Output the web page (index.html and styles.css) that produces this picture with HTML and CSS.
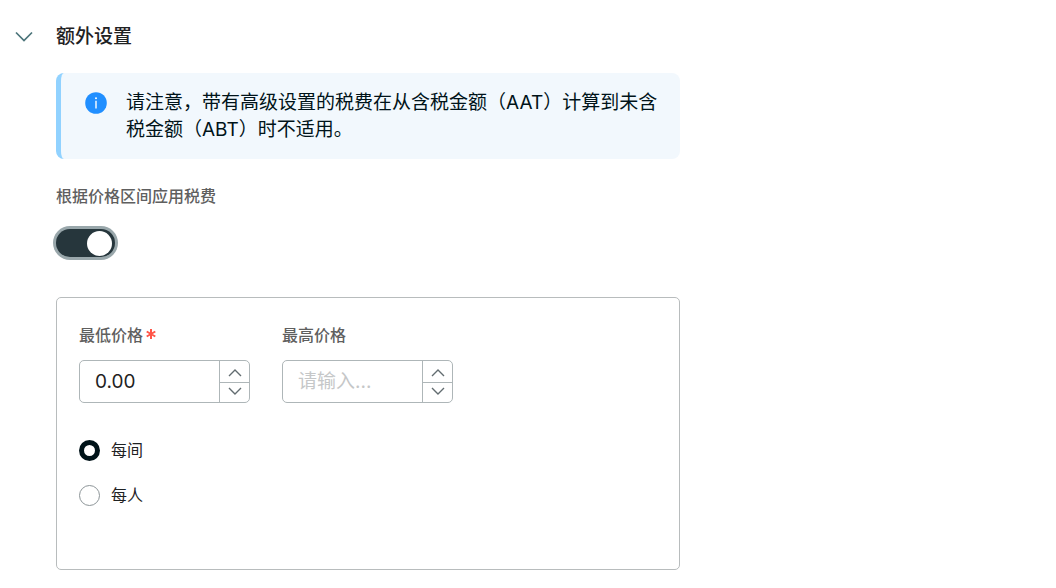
FILE: index.html
```html
<!DOCTYPE html>
<html lang="zh-CN">
<head>
<meta charset="utf-8">
<title>额外设置</title>
<link rel="stylesheet" href="styles.css">
</head>
<body>
<main class="section">
  <button class="section-toggle" type="button" aria-expanded="true" aria-controls="settings">
    <svg class="toggle-chevron" viewBox="0 0 20 12" aria-hidden="true"><path d="M2 1.5l8 8 8-8"/></svg>
    <span>额外设置</span>
  </button>
  <div class="section-body" id="settings">
    <div class="notice" role="note">
      <svg class="notice-icon" viewBox="0 0 22 22" aria-hidden="true"><circle class="info-disc" cx="11" cy="11" r="10.8"/><circle class="info-mark" cx="11" cy="6.2" r="1"/><path class="info-mark" d="M10.3 8.8h1.4v7.6h-1.4z"/></svg>
      <p class="notice-text">请注意，带有高级设置的税费在从含税金额（AAT）计算到未含税金额（ABT）时不适用。</p>
    </div>
    <label class="label switch-label" for="range-switch">根据价格区间应用税费</label>
    <input class="switch" id="range-switch" type="checkbox" role="switch" checked>
    <div class="panel">
      <div class="fields">
        <div class="field">
          <label class="label" for="min">最低价格<svg class="required" viewBox="0 0 10 12" aria-hidden="true"><path d="M5 0v10M.7 2.5l8.6 5M9.3 2.5l-8.6 5"/></svg></label>
          <div class="stepper">
            <input class="stepper-input" id="min" type="text" inputmode="decimal" value="0.00" required>
            <div class="stepper-buttons">
              <button class="step" type="button" aria-label="增加最低价格"><svg viewBox="0 0 14 8" aria-hidden="true"><path d="M1 7l6-6 6 6"/></svg></button>
              <button class="step" type="button" aria-label="减少最低价格"><svg viewBox="0 0 14 8" aria-hidden="true"><path d="M1 1l6 6 6-6"/></svg></button>
            </div>
          </div>
        </div>
        <div class="field">
          <label class="label" for="max">最高价格</label>
          <div class="stepper">
            <input class="stepper-input" id="max" type="text" inputmode="decimal" placeholder="请输入...">
            <div class="stepper-buttons">
              <button class="step" type="button" aria-label="增加最高价格"><svg viewBox="0 0 14 8" aria-hidden="true"><path d="M1 7l6-6 6 6"/></svg></button>
              <button class="step" type="button" aria-label="减少最高价格"><svg viewBox="0 0 14 8" aria-hidden="true"><path d="M1 1l6 6 6-6"/></svg></button>
            </div>
          </div>
        </div>
      </div>
      <div class="radios" role="radiogroup" aria-label="计费单位">
        <label class="radio-row"><input class="radio" type="radio" name="unit" checked><span>每间</span></label>
        <label class="radio-row"><input class="radio" type="radio" name="unit"><span>每人</span></label>
      </div>
    </div>
  </div>
</main>
</body>
</html>
```
FILE: styles.css
```css
* { box-sizing: border-box; }
body {
  margin: 0;
  background: #fff;
  color: #1f2223;
  font-family: Inter, "Noto Sans CJK SC", sans-serif;
  font-size: 16px;
}
button, input { font: inherit; color: inherit; margin: 0; }
button { padding: 0; border: 0; background: none; cursor: pointer; }
svg { display: block; fill: none; }

.section { padding: 22px 14px 18px; }
.section-toggle {
  display: flex;
  align-items: center;
  gap: 22px;
  font-size: 19px;
  font-weight: 500;
  line-height: 29px;
}
.toggle-chevron { width: 20px; height: 12px; stroke: #4b747a; stroke-width: 1.7; }
.section-body { max-width: 666px; padding: 22px 0 0 42px; }

.notice {
  display: flex;
  align-items: flex-start;
  gap: 19px;
  padding: 16px 20px 16px 24px;
  border-left: 5px solid #91d2ff;
  border-radius: 8px;
  background: #f2f8fd;
  color: #001319;
}
.notice-icon { flex: none; width: 22px; height: 22px; margin-top: 3px; }
.info-disc { fill: #218fff; }
.info-mark { fill: #fff; }
.notice-text { margin: 0; font-size: 19px; line-height: 27px; }

.label { display: flex; align-items: center; color: #5f5f5f; font-weight: 500; line-height: 24px; }
.switch-label { margin: 25px 0 21px; }
.required { width: 10px; height: 12px; margin-left: 3px; stroke: #ff5548; stroke-width: 2; }

.switch {
  appearance: none;
  display: grid;
  align-items: center;
  justify-items: end;
  width: 59px;
  height: 28px;
  padding-right: 3px;
  border-radius: 14px;
  background: #26363c;
  box-shadow: 0 0 0 3px #99a7ab;
}
.switch::before { content: ""; width: 25px; height: 25px; border-radius: 50%; background: #fff; }

.panel {
  margin-top: 40px;
  padding: 25px 22px 62px;
  border: 1px solid #b8bcbd;
  border-radius: 5px;
}
.fields { display: flex; flex-wrap: wrap; gap: 32px; }
.field { display: grid; gap: 13px; }
.stepper {
  display: flex;
  width: 171px;
  height: 43px;
  border: 1px solid #aeb6b8;
  border-radius: 5px;
}
.stepper-input {
  flex: 1;
  min-width: 0;
  padding: 0 15px;
  border: 0;
  outline: 0;
  background: none;
  font-size: 19px;
}
.stepper-input::placeholder { color: #c5c7c8; opacity: 1; }
.stepper-buttons { display: grid; grid-template-rows: 1fr 1fr; width: 30px; border-left: 1px solid #aeb6b8; }
.step { display: grid; place-items: center; padding-top: 3px; }
.step + .step { padding: 0 0 2px; border-top: 1px solid #aeb6b8; }
.step svg { width: 14px; height: 8px; stroke: #626c70; stroke-width: 1.4; }

.radios { display: grid; gap: 21px; margin-top: 35px; justify-items: start; }
.radio-row { display: flex; align-items: center; gap: 11px; line-height: 24px; }
.radio {
  appearance: none;
  width: 21px;
  height: 21px;
  border: 1px solid #8d9598;
  border-radius: 50%;
}
.radio:checked { border: 5px solid #001319; }
```
